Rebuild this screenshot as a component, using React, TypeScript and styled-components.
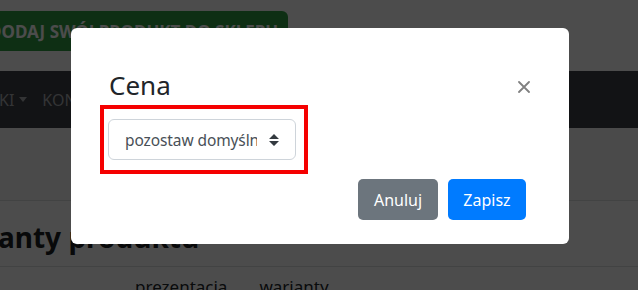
import React from 'react'
import styled, { createGlobalStyle } from 'styled-components'

const GlobalStyle = createGlobalStyle`
  html, body {
    margin: 0;
    padding: 0;
    background: #ffffff;
    overflow: hidden;
  }
  body {
    font-family: 'Noto Sans', 'DejaVu Sans', sans-serif;
    color: #212529;
  }
`

const Page = styled.div`
  width: 638px;
  height: 290px;
  overflow: hidden;
  position: relative;
  background: #f7f8f9;
`

const TopBar = styled.div`
  display: flex;
  padding: 11px 0 20px;
  background: #ffffff;
`

const AddButton = styled.div`
  width: 288px;
  height: 40px;
  display: flex;
  align-items: center;
  background: #2f9e44;
  color: #ffffff;
  font-weight: 700;
  font-size: 17px;
  border-radius: 0 6px 6px 0;
  white-space: nowrap;
  overflow: hidden;
  span {
    margin-left: -11px;
  }
`

const NavBar = styled.nav`
  height: 57px;
  display: flex;
  align-items: center;
  gap: 15px;
  background: #3c4047;
  color: #acaeb1;
  font-size: 16px;
  text-transform: uppercase;
  white-space: nowrap;
`

const NavItem = styled.span<{ $shift?: number }>`
  display: flex;
  align-items: center;
  gap: 5px;
  margin-left: ${({ $shift }) => $shift ?? 0}px;
`

const Caret = styled.span`
  width: 0;
  height: 0;
  border-left: 4px solid transparent;
  border-right: 4px solid transparent;
  border-top: 5px solid currentColor;
`

const Section = styled.div`
  margin-top: 72px;
  border-top: 1px solid #dcdfe2;
  border-bottom: 1px solid #dcdfe2;
  height: 65px;
  display: flex;
  align-items: center;
  background: #ffffff;
`

const Heading = styled.h2`
  margin: 6px 0 0 -2px;
  font-size: 28px;
  font-weight: 700;
  color: #1b1e22;
`

const Tabs = styled.div`
  display: flex;
  gap: 32px;
  padding-left: 135px;
  padding-top: 8px;
  font-size: 17px;
  color: #212529;
  background: #ffffff;
`

const Backdrop = styled.div`
  position: absolute;
  inset: 0;
  background: rgba(0, 0, 0, 0.7);
  padding: 28px 0 0 71px;
`

const Modal = styled.div`
  width: 498px;
  height: 216px;
  box-sizing: border-box;
  background: #ffffff;
  border-radius: 6px;
  padding: 40px 39px 24px 29px;
  display: flex;
  flex-direction: column;
`

const ModalHeader = styled.div`
  display: flex;
  justify-content: space-between;
  align-items: center;
  padding-left: 9px;
  height: 34px;
`

const Title = styled.h5`
  margin: 0;
  font-size: 26px;
  font-weight: 400;
  color: #212529;
`

const Close = styled.button`
  border: 0;
  background: none;
  padding: 0;
  width: 12px;
  height: 12px;
  display: flex;
  margin-top: 4px;
  cursor: pointer;
`

const Highlight = styled.div`
  margin-top: 3px;
  width: 208px;
  box-sizing: border-box;
  border: 4px solid #f50000;
  padding: 10px 8px 10px 4px;
`

const SelectBox = styled.div`
  position: relative;
  height: 41px;
  box-sizing: border-box;
  border: 1px solid #ced4da;
  border-radius: 6px;
  display: flex;
  align-items: center;
`

const Select = styled.select`
  appearance: none;
  width: 100%;
  height: 100%;
  border: 0;
  background: transparent;
  padding: 0 38px 0 16px;
  font-family: inherit;
  font-size: 15.5px;
  letter-spacing: -0.1px;
  color: #495057;
  outline: none;
`

const SortIcon = styled.svg`
  position: absolute;
  right: 16px;
  top: 14px;
  pointer-events: none;
`

const Footer = styled.div`
  display: flex;
  justify-content: flex-end;
  gap: 10px;
  margin-top: 5px;
  margin-right: 4px;
`

const Button = styled.button<{ $variant: 'secondary' | 'primary' }>`
  height: 41px;
  border: 0;
  border-radius: 5px;
  padding: 0;
  font-family: inherit;
  font-size: 16px;
  color: #ffffff;
  background: ${({ $variant }) => ($variant === 'primary' ? '#007bff' : '#6c757d')};
  width: ${({ $variant }) => ($variant === 'primary' ? 78 : 80)}px;
`

export default function App() {
  return (
    <Page>
      <GlobalStyle />
      <TopBar>
        <AddButton>
          <span>DODAJ SWÓJ PRODUKT DO SKLEPU</span>
        </AddButton>
      </TopBar>
      <NavBar>
        <NavItem $shift={-1}>
          KI <Caret />
        </NavItem>
        <NavItem>KONTAKT</NavItem>
      </NavBar>
      <Section>
        <Heading>anty produktu</Heading>
      </Section>
      <Tabs>
        <span>prezentacja</span>
        <span>warianty</span>
      </Tabs>

      <Backdrop>
        <Modal>
          <ModalHeader>
            <Title>Cena</Title>
            <Close aria-label="Zamknij">
              <svg width="12" height="12" viewBox="0 0 12 12">
                <path d="M1 1 L11 11 M11 1 L1 11" stroke="#808080" strokeWidth="1.8" strokeLinecap="round" />
              </svg>
            </Close>
          </ModalHeader>
          <Highlight>
            <SelectBox>
              <Select defaultValue="default">
                <option value="default">pozostaw domyślnie</option>
              </Select>
              <SortIcon width="10" height="12" viewBox="0 0 10 12">
                <path d="M5 0 L10 5 H0 Z M0 7 H10 L5 12 Z" fill="#343a40" />
              </SortIcon>
            </SelectBox>
          </Highlight>
          <Footer>
            <Button $variant="secondary">Anuluj</Button>
            <Button $variant="primary">Zapisz</Button>
          </Footer>
        </Modal>
      </Backdrop>
    </Page>
  )
}
